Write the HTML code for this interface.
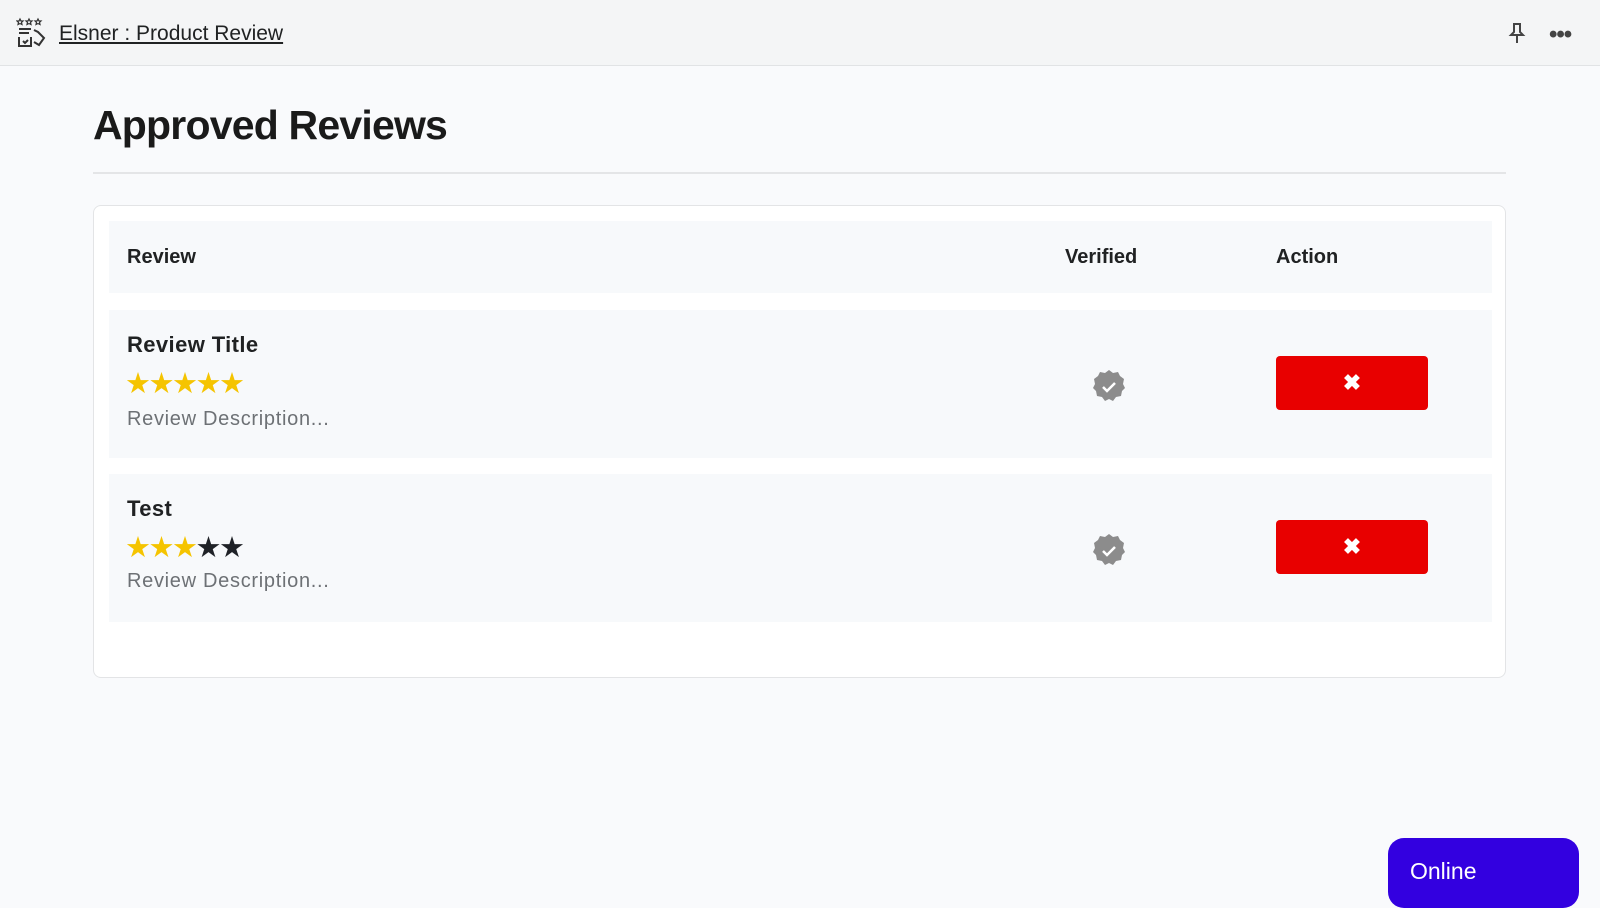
<!DOCTYPE html>
<html><head><meta charset="utf-8"><style>
*{box-sizing:border-box;margin:0;padding:0}
body{width:1600px;height:900px;overflow:hidden;background:#f9fafc;font-family:"Liberation Sans",sans-serif;position:relative;color:#202223}
.top{position:absolute;left:0;top:0;width:1600px;height:66px;background:#f4f5f6;border-bottom:1px solid #e1e3e5}
.top a{position:absolute;left:59px;top:22px;font-size:21px;color:#202223;text-decoration:underline}
h1{position:absolute;left:93px;top:102px;font-size:41px;font-weight:bold;letter-spacing:-0.8px;color:#1a1a1a}
.hr{position:absolute;left:93px;top:172px;width:1413px;height:2px;background:#e4e5e7}
.card{position:absolute;left:93px;top:205px;width:1413px;height:473px;background:#fff;border:1px solid #e3e4e6;border-radius:8px}
.row{position:absolute;left:15px;width:1383px;background:#f7f9fb}
.th{font-size:20px;font-weight:bold;position:absolute;top:25px}
.t{position:absolute;left:18px;font-size:22px;font-weight:bold;letter-spacing:0.4px}
.stars{position:absolute;left:16px;font-size:29px;letter-spacing:-2.5px;color:#f5c400}
.d{position:absolute;left:18px;font-size:20px;color:#6d7175;letter-spacing:0.7px}
.btn{position:absolute;left:1167px;width:152px;height:54px;background:#e80000;border-radius:4px;color:#fff;font-size:22px;font-weight:bold;text-align:center;line-height:54px}
.badge{position:absolute;left:983px}
.online{position:absolute;left:1388px;top:838px;width:191px;height:70px;background:#3300e0;border-radius:16px;color:#fff;font-size:23px;padding:20px 0 0 22px}
</style></head><body>
<div class="top">
<svg style="position:absolute;left:16px;top:16px" width="32" height="32" viewBox="0 0 32 32" fill="none" stroke="#333" stroke-width="2"><path d="M4 3l1 2 2 0-1.5 1.5.5 2-2-1-2 1 .5-2L1 5h2zM13 3l1 2 2 0-1.5 1.5.5 2-2-1-2 1 .5-2L10 5h2zM22 3l1 2 2 0-1.5 1.5.5 2-2-1-2 1 .5-2L19 5h2z" stroke-width="1.2"/><path d="M3 13h12M3 17h10M3 21v9h12v-9M7 25l2 2 3-3M18 14l4 2 6 6-5 7-5-3"/></svg>
<a>Elsner : Product Review</a>
<svg style="position:absolute;left:1508px;top:22px" width="18" height="22" viewBox="0 0 18 22" fill="none" stroke="#444" stroke-width="2"><path d="M5 2h8M6 2v8l-3 3h12l-3-3V2M9 13v8"/></svg>
<div style="position:absolute;left:1549px;top:21px;font-size:24px;color:#444;letter-spacing:-1px;font-weight:bold">•••</div>
</div>
<h1>Approved Reviews</h1>
<div class="hr"></div>
<div class="card">
<div class="row" style="top:15px;height:72px">
<div class="th" style="left:18px">Review</div>
<div class="th" style="left:956px">Verified</div>
<div class="th" style="left:1167px">Action</div>
</div>
<div class="row" style="top:104px;height:148px">
<div class="t" style="top:22px">Review Title</div>
<div class="stars" style="top:56px">★★★★★</div>
<div class="d" style="top:98px">Review Description...</div>
<svg class="badge" style="top:59px" width="34" height="34" viewBox="0 0 34 34"><path d="M17 1l4 3 5-1 2 4 4 3-1 5 2 4-3 3-1 5-5 1-3 4-4-2-4 2-3-4-5-1-1-5-3-3 2-4-1-5 4-3 2-4 5 1z" fill="#8c8c8c"/><path d="M11 18l4 4 8-8" fill="none" stroke="#fff" stroke-width="2.5"/></svg>
<div class="btn" style="top:46px">✖</div>
</div>
<div class="row" style="top:268px;height:148px">
<div class="t" style="top:22px">Test</div>
<div class="stars" style="top:56px">★★★<span style="color:#1f2227">★★</span></div>
<div class="d" style="top:96px">Review Description...</div>
<svg class="badge" style="top:59px" width="34" height="34" viewBox="0 0 34 34"><path d="M17 1l4 3 5-1 2 4 4 3-1 5 2 4-3 3-1 5-5 1-3 4-4-2-4 2-3-4-5-1-1-5-3-3 2-4-1-5 4-3 2-4 5 1z" fill="#8c8c8c"/><path d="M11 18l4 4 8-8" fill="none" stroke="#fff" stroke-width="2.5"/></svg>
<div class="btn" style="top:46px">✖</div>
</div>
</div>
<div class="online">Online</div>
</body></html>
